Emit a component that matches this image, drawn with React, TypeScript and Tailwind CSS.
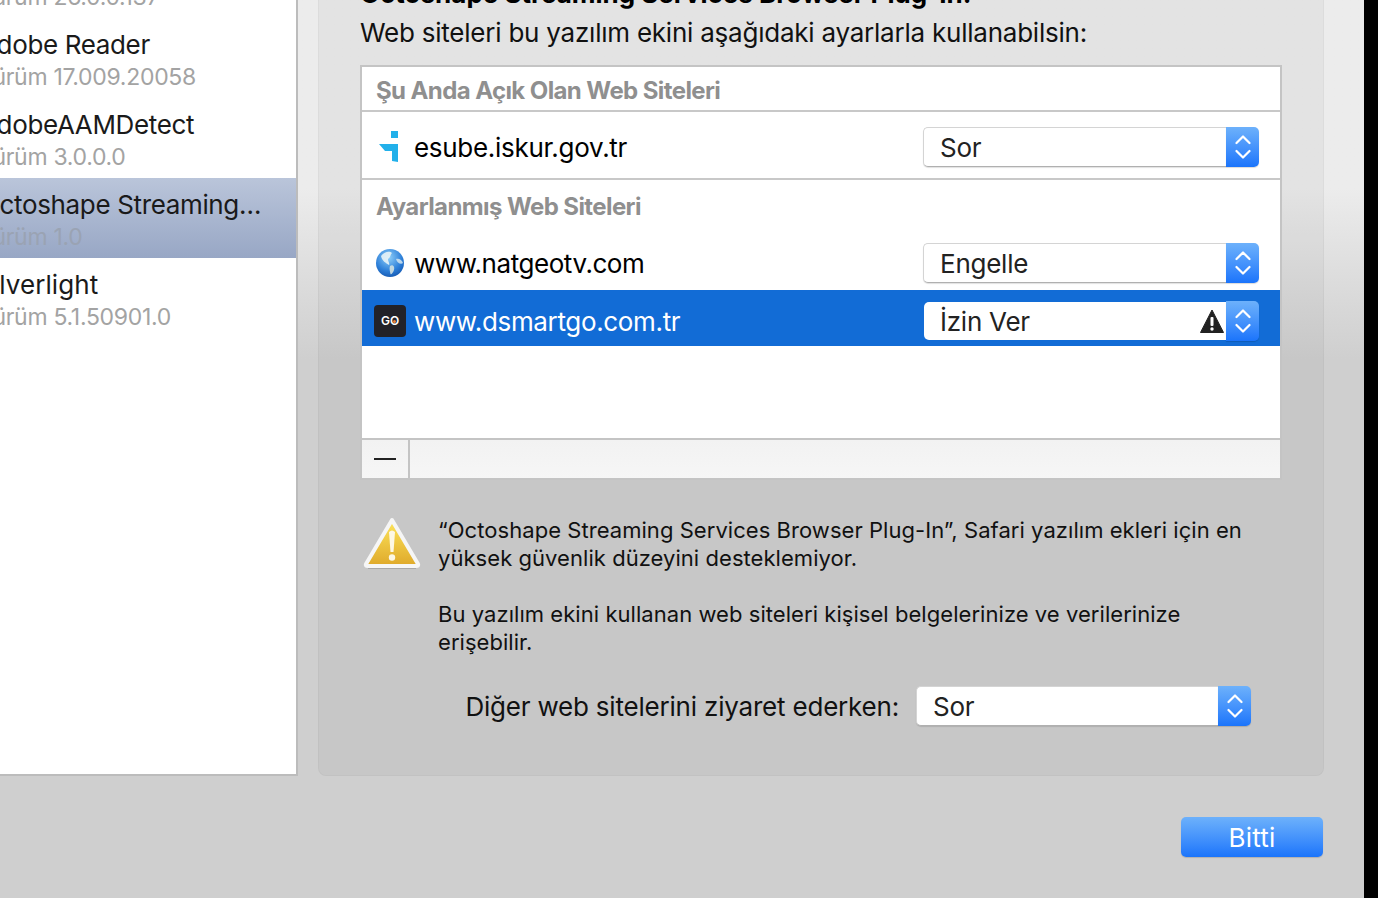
const F = "font-['Inter','Liberation_Sans',sans-serif]";

function Chevrons() {
  return (
    <svg width="16" height="26" viewBox="0 0 16 26" fill="none" stroke="white" strokeWidth="2.2" strokeLinecap="round" strokeLinejoin="round">
      <path d="M1.5 9 L8 2.5 L14.5 9" />
      <path d="M1.5 17 L8 23.5 L14.5 17" />
    </svg>
  );
}

function Select({ label, className, flat, warn }: { label: string; className: string; flat?: boolean; warn?: boolean }) {
  return (
    <div className={`flex items-stretch ${className}`}>
      <div
        className={`flex-1 flex items-center justify-between bg-white rounded-l-[5px] pl-[16px] pr-[2px] text-[#222] text-[26px] leading-none tracking-[-0.25px] ${
          flat ? "my-[1px]" : "border border-[#d4d4d4] border-b-[#b0b0b0] border-r-0 shadow-[0_1px_1px_rgba(0,0,0,0.12)]"
        }`}
      >
        <span className="pt-[2px]">{label}</span>
        {warn && (
          <svg width="24" height="24" viewBox="0 0 24 24">
            <path d="M12 1 L23.5 23.5 L0.5 23.5 Z" fill="#222" stroke="#222" strokeLinejoin="round" />
            <rect x="10.5" y="8" width="3" height="9" rx="1" fill="#fff" />
            <circle cx="12" cy="20" r="1.7" fill="#fff" />
          </svg>
        )}
      </div>
      <div className="w-[33px] flex items-center justify-center rounded-r-[5px] bg-gradient-to-b from-[#6db1fb] to-[#1a74fb] shadow-[0_1px_1px_rgba(0,0,0,0.15)]">
        <Chevrons />
      </div>
    </div>
  );
}

function ListItem({ title, sub, selected, titleClass }: { title: string; sub: string; selected?: boolean; titleClass: string }) {
  return (
    <div className={`h-[80px] flex flex-col whitespace-nowrap pt-[11px] ${selected ? "bg-gradient-to-b from-[#bac5da] to-[#98a7c5]" : ""}`}>
      <div className={`text-[26px] leading-[32px] text-[#1a1a1a] ${titleClass}`}>{title}</div>
      <div className={`text-[23px] leading-[28px] mt-[2px] ml-[-22px] tracking-[-0.3px] ${selected ? "text-[#9aa3b3]" : "text-[#a3a3a3]"}`}>{sub}</div>
    </div>
  );
}

function Globe() {
  return (
    <svg width="30" height="30" viewBox="0 0 30 30">
      <defs>
        <radialGradient id="g" cx="0.45" cy="0.3" r="0.8">
          <stop offset="0" stopColor="#8fd0fa" />
          <stop offset="0.6" stopColor="#2d7fd8" />
          <stop offset="1" stopColor="#0f4fa8" />
        </radialGradient>
      </defs>
      <circle cx="15" cy="15" r="14" fill="url(#g)" />
      <path d="M6 8 C10 3 15 3 17 5 C15 7 16 9 13 11 C13 14 15 15 14 17 C11 15 7 13 6 8 Z" fill="#e8f3f6" opacity="0.9" />
      <path d="M15 18 C18 16 20 19 19 22 C18 25 16 27 15.5 26 C15 23 14 21 15 18 Z" fill="#cfe0e0" opacity="0.9" />
      <path d="M21 11 C24 10 27 12 28 15 C26 17 22 15 21 11 Z" fill="#dcebf0" opacity="0.8" />
    </svg>
  );
}

function Esube() {
  return (
    <svg width="20" height="32" viewBox="0 0 20 32" fill="#22b0ea">
      <rect x="12" y="0" width="7" height="7" />
      <path d="M0 13 L19 13 L19 31 L13 30 L13 20 L6 20 Z" />
    </svg>
  );
}

function BigWarning() {
  return (
    <svg width="60" height="56" viewBox="0 0 60 56">
      <defs>
        <linearGradient id="w" x1="0" y1="0" x2="0" y2="1">
          <stop offset="0" stopColor="#fde55c" />
          <stop offset="1" stopColor="#dfa92a" />
        </linearGradient>
      </defs>
      <path d="M30 4 L56 48 Q57 50 54 50 L6 50 Q3 50 4 48 Z" fill="url(#w)" stroke="#f6f6f6" strokeWidth="4" strokeLinejoin="round" />
      <path d="M30 52.5 L6 52.5 L54 52.5 Z" stroke="#a8a8a8" strokeWidth="1" />
      <path d="M27 16 Q30 13 33 16 L31.5 36 L28.5 36 Z" fill="#fdf8e6" />
      <circle cx="30" cy="41.5" r="3.2" fill="#fdf8e6" />
    </svg>
  );
}

export default function App() {
  return (
    <div className={`w-[1378px] h-[898px] overflow-hidden bg-black ${F}`}>
      <div className="w-[1364px] h-[898px] bg-gradient-to-b from-[#ececec] from-[21%] to-[#cfcfcf] to-[40%]">
        <div className="flex h-[776px]">
          <div className="w-[298px] h-[776px] bg-white border-r-2 border-b-2 border-[#bcbcbc] overflow-hidden">
            <div className="mt-[-62px]">
              <ListItem title="Adobe Flash Player" sub="Sürüm 26.0.0.137" titleClass="ml-[-21px] tracking-[-0.35px]" />
              <ListItem title="Adobe Reader" sub="Sürüm 17.009.20058" titleClass="ml-[-21px] tracking-[-0.35px]" />
              <ListItem title="AdobeAAMDetect" sub="Sürüm 3.0.0.0" titleClass="ml-[-21px] tracking-[-0.35px]" />
              <ListItem title="Octoshape Streaming…" sub="Sürüm 1.0" selected titleClass="ml-[-20px] tracking-[-0.35px]" />
              <ListItem title="Silverlight" sub="Sürüm 5.1.50901.0" titleClass="ml-[-24px] tracking-[0.1px]" />
            </div>
          </div>
          <div className="w-[1006px] h-[776px] ml-[20px] rounded-b-[8px] bg-black/[0.035] border-x border-b border-black/[0.03] overflow-hidden pl-[41px]">
            <div className="mt-[-20px] h-[28px] text-[26px] leading-[28px] font-bold text-black whitespace-nowrap tracking-[0px]">
              Octoshape Streaming Services Browser Plug-In:
            </div>
            <div className="mt-[11px] h-[28px] text-[26px] leading-[28px] text-[#111] whitespace-nowrap tracking-[-0.23px]">
              Web siteleri bu yazılım ekini aşağıdaki ayarlarla kullanabilsin:
            </div>
            <div className="mt-[18px] w-[922px] h-[415px] border-2 border-[#c4c4c4] bg-white flex flex-col">
              <div className="h-[45px] flex items-center pl-[14px] pt-[5px] text-[24px] font-bold text-[#8f8f8f] tracking-[-0.6px] border-b-2 border-[#c8c8c8] shrink-0">
                Şu Anda Açık Olan Web Siteleri
              </div>
              <div className="h-[68px] flex items-center pt-[4px] border-b-2 border-[#c8c8c8] shrink-0">
                <div className="w-[52px] flex justify-center pl-[2px]"><Esube /></div>
                <span className="text-[26px] tracking-[-0.3px] text-black">esube.iskur.gov.tr</span>
                <Select label="Sor" className="ml-auto mr-[21px] w-[336px] h-[40px]" />
              </div>
              <div className="h-[54px] flex items-center pl-[14px] text-[24px] font-bold text-[#8f8f8f] tracking-[-0.6px] shrink-0">
                Ayarlanmış Web Siteleri
              </div>
              <div className="h-[56px] flex items-center pt-[2px] shrink-0">
                <div className="w-[52px] flex justify-center pl-[4px]"><Globe /></div>
                <span className="text-[26px] tracking-[-0.45px] text-black">www.natgeotv.com</span>
                <Select label="Engelle" className="ml-auto mr-[21px] w-[336px] h-[40px]" />
              </div>
              <div className="h-[56px] flex items-center pt-[6px] bg-[#126cd6] shrink-0">
                <div className="w-[52px] flex justify-center pl-[4px]">
                  <div className="relative w-[32px] h-[32px] rounded-[4px] bg-[#222228] flex items-center justify-center text-white text-[12px] font-semibold leading-none">
                    GO
                    <span className="absolute left-[18.5px] top-[14.5px] w-[3px] h-[3px] rounded-full bg-[#f08a40]" />
                  </div>
                </div>
                <span className="text-[26px] tracking-[-0.35px] text-white">www.dsmartgo.com.tr</span>
                <Select label="İzin Ver" flat warn className="ml-auto mr-[21px] w-[335px] h-[40px]" />
              </div>
              <div className="flex-1" />
              <div className="h-[40px] flex border-t-2 border-[#c4c4c4] bg-gradient-to-b from-[#f2f2f2] to-[#f6f6f6] shrink-0">
                <div className="w-[48px] flex items-center justify-center border-r-2 border-[#c4c4c4]">
                  <div className="w-[22px] h-[2px] bg-[#222]" />
                </div>
              </div>
            </div>
            <div className="mt-[37px] flex">
              <div className="w-[78px] shrink-0 mt-[-1px] pl-[2px]"><BigWarning /></div>
              <div className="w-[830px] text-[22px] leading-[28px] text-[#111] tracking-[0.05px] mt-[-1px]">
                <p>“Octoshape Streaming Services Browser Plug-In”, Safari yazılım ekleri için en yüksek güvenlik düzeyini desteklemiyor.</p>
                <p className="mt-[28px]">Bu yazılım ekini kullanan web siteleri kişisel belgelerinize ve verilerinize erişebilir.</p>
              </div>
            </div>
            <div className="mt-[30px] flex items-center">
              <div className="w-[539px] text-right text-[26px] text-[#111] tracking-[-0.2px] whitespace-nowrap">Diğer web sitelerini ziyaret ederken:</div>
              <Select label="Sor" className="ml-[17px] w-[335px] h-[40px]" />
            </div>
          </div>
        </div>
        <div className="flex justify-end pr-[41px] mt-[41px]">
          <div className="w-[142px] h-[40px] rounded-[5px] bg-gradient-to-b from-[#6db1fb] to-[#1a74fb] flex items-center justify-center text-white text-[26px] tracking-[0.2px] shadow-[0_1px_1px_rgba(0,0,0,0.15)]">
            Bitti
          </div>
        </div>
      </div>
    </div>
  );
}
